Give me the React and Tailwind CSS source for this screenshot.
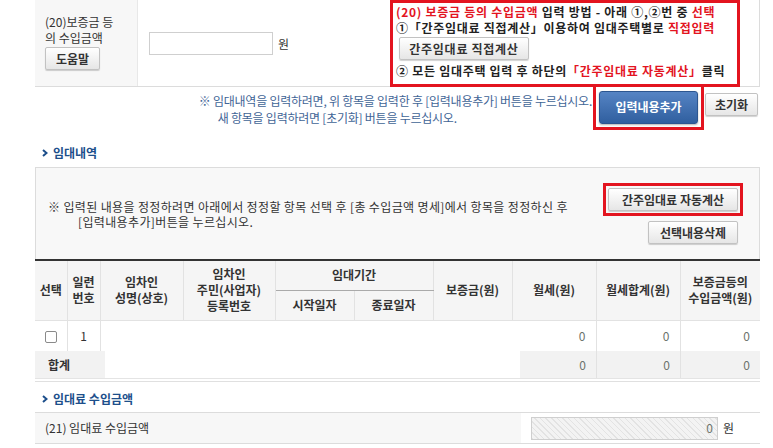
import React from 'react';

const grayBtn =
  'border border-[#c2c2c2] rounded-[2px] bg-linear-to-b from-white to-[#e6e6e6] text-[#333] font-bold text-[12px] leading-none shadow-[0_1px_1px_rgba(0,0,0,0.18)]';

function Chevron() {
  return (
    <svg width="6" height="8" viewBox="0 0 6 8" className="mr-[5px]">
      <path d="M1 1 L4.5 4 L1 7" fill="none" stroke="#1d4f8b" strokeWidth="2" />
    </svg>
  );
}

function SectionTitle({ children }) {
  return (
    <div className="flex items-center pl-[7px] text-[12px] font-bold text-[#1d4f8b] leading-[16px]">
      <Chevron />
      {children}
    </div>
  );
}

function Check() {
  return <span className="inline-block w-[12px] h-[12px] rounded-[2px] border border-[#8a8a8a] bg-white align-middle" />;
}

const th = 'border border-[#e2e2e2] bg-[#f5f5f5] font-bold text-[#333] text-center leading-[16px] p-0';
const zero = 'text-right pr-[10px] text-[#6c736c]';

export default function App() {
  return (
    <div className="w-[773px] h-[448px] overflow-hidden bg-white text-[12px] text-[#333] font-['Noto_Sans_CJK_KR','Noto_Sans',sans-serif]">
      <div className="ml-[35px] w-[725px]">
        {/* (20) row */}
        <div className="flex h-[87px] border-b border-r border-[#dcdcdc]">
          <div className="w-[103px] shrink-0 bg-[#f7f7f7] border-r border-[#e8e8e8] pl-[10px] pt-[14px]">
            <p className="leading-[16px]">(20)보증금 등<br />의 수입금액</p>
            <button className={`${grayBtn} w-[55px] h-[23px] mt-[1px]`}>도움말</button>
          </div>
          <div className="flex-1 flex">
            <div className="flex items-center ml-[11px] mt-[32px] self-start">
              <input className="w-[124px] h-[23px] border border-[#cfcfcf] bg-white" />
              <span className="ml-[5px]">원</span>
            </div>
            <div className="ml-auto mr-[19px] w-[350px] h-[87px] border-[3px] border-[#e3141f] pl-[3px] pt-[1px] font-bold tracking-[0.06em] text-[#222] leading-[16px]">
              <p>
                <span className="text-[#e3141f]">(20) 보증금 등의 수입금액</span> 입력 방법 - 아래 ①,②번 중{' '}
                <span className="text-[#e3141f]">선택</span>
              </p>
              <p>
                ①「간주임대료 직접계산」이용하여 임대주택별로 <span className="text-[#e3141f]">직접입력</span>
              </p>
              <button className={`${grayBtn} w-[130px] h-[23px] mt-[1px] ml-[3px]`}>간주임대료 직접계산</button>
              <p className="mt-[3px]">
                ② 모든 임대주택 입력 후 하단의<span className="text-[#e3141f]">「간주임대료 자동계산」</span>클릭
              </p>
            </div>
          </div>
        </div>

        {/* note + buttons */}
        <div className="flex justify-end items-start h-[44px]">
          <div className="text-[#3f6596] leading-[17px] mt-[5px] tracking-[-0.02em]">
            <p>※ 임대내역을 입력하려면, 위 항목을 입력한 후 [입력내용추가] 버튼을 누르십시오.</p>
            <p className="pl-[19px]">새 항목을 입력하려면 [초기화] 버튼을 누르십시오.</p>
          </div>
          <div className="mt-[-3px] ml-[1px] w-[111px] h-[46px] border-[3px] border-[#e3141f] flex items-center justify-center">
            <button className="w-[99px] h-[33px] rounded-[3px] border border-[#2c5690] bg-linear-to-b from-[#5584c4] to-[#305f9f] text-white font-bold text-[12px] shadow-[0_1px_2px_rgba(0,0,0,0.3)]">
              입력내용추가
            </button>
          </div>
          <button className={`${grayBtn} w-[53px] h-[23px] mt-[6px] ml-[1px] mr-[2px]`}>초기화</button>
        </div>

        <div className="h-[14px]" />
        <SectionTitle>임대내역</SectionTitle>

        {/* gray notice box */}
        <div className="mt-[6px] h-[92px] bg-[#f8f8f8] border border-b-0 border-[#dcdcdc] flex items-center pl-[12px] pr-[16px]">
          <div className="flex-1 leading-[15px] tracking-[0.03em] text-[#333]">
            <p>※ 입력된 내용을 정정하려면 아래에서 정정할 항목 선택 후 [총 수입금액 명세]에서 항목을 정정하신 후</p>
            <p className="pl-[30px]">[입력내용추가]버튼을 누르십시오.</p>
          </div>
          <div className="flex flex-col items-end">
            <div className="border-[3px] border-[#e3141f] p-[2px]">
              <button className={`${grayBtn} w-[130px] h-[23px]`}>간주임대료 자동계산</button>
            </div>
            <button className={`${grayBtn} w-[90px] h-[23px] mt-[5px] mr-[5px]`}>선택내용삭제</button>
          </div>
        </div>

        {/* table */}
        <table className="w-[725px] table-fixed border-collapse border-t-2 border-t-[#333]">
          <colgroup>
            <col className="w-[32px]" />
            <col className="w-[33px]" />
            <col className="w-[83px]" />
            <col className="w-[92px]" />
            <col className="w-[79px]" />
            <col className="w-[79px]" />
            <col className="w-[79px]" />
            <col className="w-[84px]" />
            <col className="w-[84px]" />
            <col className="w-[80px]" />
          </colgroup>
          <thead>
            <tr className="h-[30px]">
              <th rowSpan={2} className={`${th} border-l-0`}>선택</th>
              <th rowSpan={2} className={th}>일련<br />번호</th>
              <th rowSpan={2} className={th}>임차인<br />성명(상호)</th>
              <th rowSpan={2} className={th}>임차인<br />주민(사업자)<br />등록번호</th>
              <th colSpan={2} className={`${th} border-b-[#aaa]`}>임대기간</th>
              <th rowSpan={2} className={th}>보증금(원)</th>
              <th rowSpan={2} className={th}>월세(원)</th>
              <th rowSpan={2} className={th}>월세합계(원)</th>
              <th rowSpan={2} className={`${th} border-r-0`}>보증금등의<br />수입금액(원)</th>
            </tr>
            <tr className="h-[30px]">
              <th className={`${th} border-t-[#aaa]`}>시작일자</th>
              <th className={`${th} border-t-[#aaa]`}>종료일자</th>
            </tr>
          </thead>
          <tbody>
            <tr className="h-[31px] border-t border-[#bdbdbd]">
              <td className="text-center border-r border-[#e2e2e2]"><Check /></td>
              <td className="text-center border-r border-[#e2e2e2]">1</td>
              <td colSpan={5} />
              <td className={`${zero} border-r border-[#e2e2e2]`}>0</td>
              <td className={`${zero} border-r border-[#e2e2e2]`}>0</td>
              <td className={zero}>0</td>
            </tr>
          </tbody>
        </table>

        {/* total */}
        <div className="flex h-[28px] border-b border-[#e4e4e4]">
          <div className="w-[70px] bg-[#f2f2f2] pl-[13px] flex items-center font-bold">합계</div>
          <div className="flex-1" />
          <div className={`w-[76px] bg-[#f2f2f2] flex items-center justify-end ${zero}`}>0</div>
          <div className={`w-[84px] bg-[#f2f2f2] border-l border-[#e2e2e2] flex items-center justify-end ${zero}`}>0</div>
          <div className={`w-[80px] bg-[#f2f2f2] border-l border-[#e2e2e2] flex items-center justify-end ${zero}`}>0</div>
        </div>
        <div className="h-[3px] border-b border-[#e0e0e0]" />

        <div className="h-[9px]" />
        <SectionTitle>임대료 수입금액</SectionTitle>

        <div className="mt-[5px] flex h-[32px] border-y border-[#dcdcdc]">
          <div className="w-[486px] bg-[#f7f7f7] pl-[10px] flex items-center">(21) 임대료 수입금액</div>
          <div className="flex-1 flex items-center pl-[10px]">
            <div className="w-[187px] h-[23px] border border-[#cfcfcf] bg-[repeating-linear-gradient(45deg,#e3e3e3_0,#e3e3e3_1px,#f3f3f3_1px,#f3f3f3_4px)] flex items-center justify-end pr-[4px] text-[#6c736c]">
              0
            </div>
            <span className="ml-[5px]">원</span>
          </div>
        </div>
      </div>
    </div>
  );
}
